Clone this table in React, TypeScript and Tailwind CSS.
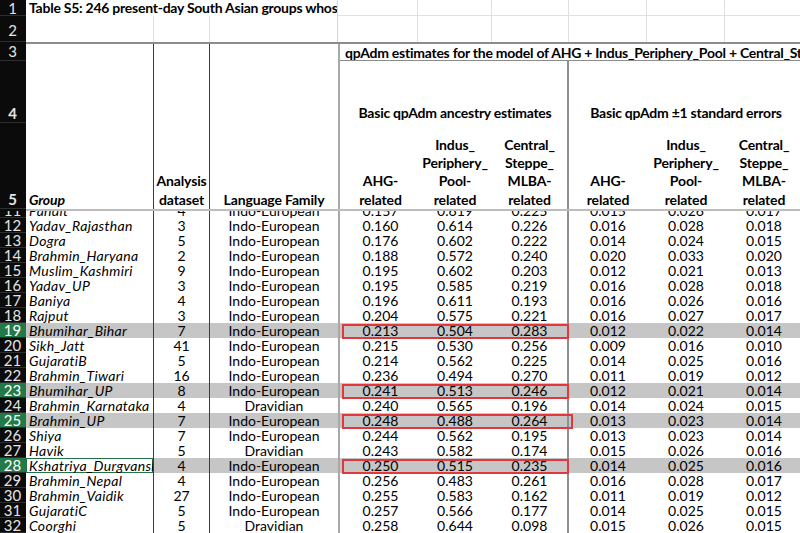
import React from "react"

type Row = {
  n: number
  group: string
  ds: string
  lang: string
  v: string[]
  hl?: boolean
  red?: "box" | "wide"
  active?: boolean
}

const IE = "Indo-European"
const DR = "Dravidian"

const rows: Row[] = [
  { n: 12, group: "Yadav_Rajasthan", ds: "3", lang: IE, v: ["0.160", "0.614", "0.226", "0.016", "0.028", "0.018"] },
  { n: 13, group: "Dogra", ds: "5", lang: IE, v: ["0.176", "0.602", "0.222", "0.014", "0.024", "0.015"] },
  { n: 14, group: "Brahmin_Haryana", ds: "2", lang: IE, v: ["0.188", "0.572", "0.240", "0.020", "0.033", "0.020"] },
  { n: 15, group: "Muslim_Kashmiri", ds: "9", lang: IE, v: ["0.195", "0.602", "0.203", "0.012", "0.021", "0.013"] },
  { n: 16, group: "Yadav_UP", ds: "3", lang: IE, v: ["0.195", "0.585", "0.219", "0.016", "0.028", "0.018"] },
  { n: 17, group: "Baniya", ds: "4", lang: IE, v: ["0.196", "0.611", "0.193", "0.016", "0.026", "0.016"] },
  { n: 18, group: "Rajput", ds: "3", lang: IE, v: ["0.204", "0.575", "0.221", "0.016", "0.027", "0.017"] },
  { n: 19, group: "Bhumihar_Bihar", ds: "7", lang: IE, v: ["0.213", "0.504", "0.283", "0.012", "0.022", "0.014"], hl: true, red: "box" },
  { n: 20, group: "Sikh_Jatt", ds: "41", lang: IE, v: ["0.215", "0.530", "0.256", "0.009", "0.016", "0.010"] },
  { n: 21, group: "GujaratiB", ds: "5", lang: IE, v: ["0.214", "0.562", "0.225", "0.014", "0.025", "0.016"] },
  { n: 22, group: "Brahmin_Tiwari", ds: "16", lang: IE, v: ["0.236", "0.494", "0.270", "0.011", "0.019", "0.012"] },
  { n: 23, group: "Bhumihar_UP", ds: "8", lang: IE, v: ["0.241", "0.513", "0.246", "0.012", "0.021", "0.014"], hl: true, red: "box" },
  { n: 24, group: "Brahmin_Karnataka", ds: "4", lang: DR, v: ["0.240", "0.565", "0.196", "0.014", "0.024", "0.015"] },
  { n: 25, group: "Brahmin_UP", ds: "7", lang: IE, v: ["0.248", "0.488", "0.264", "0.013", "0.023", "0.014"], hl: true, red: "wide" },
  { n: 26, group: "Shiya", ds: "7", lang: IE, v: ["0.244", "0.562", "0.195", "0.013", "0.023", "0.014"] },
  { n: 27, group: "Havik", ds: "5", lang: DR, v: ["0.243", "0.582", "0.174", "0.015", "0.026", "0.016"] },
  { n: 28, group: "Kshatriya_Durgvanshi", ds: "4", lang: IE, v: ["0.250", "0.515", "0.235", "0.014", "0.025", "0.016"], hl: true, red: "box", active: true },
  { n: 29, group: "Brahmin_Nepal", ds: "4", lang: IE, v: ["0.256", "0.483", "0.261", "0.016", "0.028", "0.017"] },
  { n: 30, group: "Brahmin_Vaidik", ds: "27", lang: IE, v: ["0.255", "0.583", "0.162", "0.011", "0.019", "0.012"] },
  { n: 31, group: "GujaratiC", ds: "5", lang: IE, v: ["0.257", "0.566", "0.177", "0.014", "0.025", "0.015"] },
  { n: 32, group: "Coorghi", ds: "5", lang: DR, v: ["0.258", "0.644", "0.098", "0.015", "0.026", "0.015"] },
]

const pandit: Row = { n: 11, group: "Pandit", ds: "4", lang: IE, v: ["0.157", "0.619", "0.225", "0.015", "0.026", "0.017"] }

function RowHead({ n, sel, align = "center" }: { n: number; sel?: boolean; align?: "center" | "end" }) {
  return (
    <div
      className={`flex w-[26px] shrink-0 justify-center border-b border-[#2e2e2e] pr-[1px] text-[15px] ${
        align === "end" ? "items-end" : "items-center"
      } ${sel ? "bg-[#237a48] text-white" : "bg-[#0b0b0b] text-[#e4e4e4]"}`}
    >
      {n}
    </div>
  )
}

function DataRow({ r }: { r: Row }) {
  return (
    <div className={`flex h-[15px] shrink-0 leading-[15px] ${r.hl ? "bg-[#c6c6c6]" : ""}`}>
      <RowHead n={r.n} sel={r.hl} />
      <div
        className={`w-[128px] shrink-0 overflow-hidden whitespace-nowrap border-r border-[#3c3c3c] pl-[3px] italic tracking-[0.3px] ${
          r.active ? "bg-white shadow-[inset_0_0_0_1px_#217346]" : ""
        }`}
      >
        {r.group}
      </div>
      <div className="w-[56px] shrink-0 border-r border-[#3c3c3c] text-center">{r.ds}</div>
      <div className="w-[130px] shrink-0 border-r-2 border-[#a8a8a8] text-center">{r.lang}</div>
      <div className="w-[3px] shrink-0" />
      <div className="relative flex w-[226px] shrink-0">
        <div className="w-[75px] shrink-0 text-center">{r.v[0]}</div>
        <div className="w-[74px] shrink-0 text-center">{r.v[1]}</div>
        <div className="w-[77px] shrink-0 border-r-2 border-[#8f8f8f] text-center">{r.v[2]}</div>
        {r.red && (
          <div
            className={`pointer-events-none absolute -left-[1px] top-[1px] -bottom-[1px] z-10 border-2 border-[#e0383c] ${
              r.red === "wide" ? "-right-[4px]" : "right-0"
            }`}
          />
        )}
      </div>
      <div className="w-[78px] shrink-0 text-center">{r.v[3]}</div>
      <div className="w-[78px] shrink-0 text-center">{r.v[4]}</div>
      <div className="w-[78px] shrink-0 text-center">{r.v[5]}</div>
    </div>
  )
}

export default function App() {
  return (
    <div className="flex h-[533px] w-[800px] flex-col overflow-hidden bg-white font-['Lato','Liberation_Sans',sans-serif] text-[14px] text-black">
      {/* row 1 - title */}
      <div className="flex h-[16px] shrink-0 leading-[16px]">
        <RowHead n={1} />
        <div className="w-[312px] shrink-0 overflow-hidden whitespace-nowrap border-r border-[#d6d6d6] pl-[3px] font-bold tracking-[-0.25px]">
          Table S5: 246 present-day South Asian groups whose qpAdm estimates
        </div>
        <div className="w-[80px] shrink-0 border-r border-b border-[#e0e0e0]" />
        <div className="w-[74px] shrink-0 border-r border-b border-[#e0e0e0]" />
        <div className="w-[77px] shrink-0 border-r border-b border-[#e0e0e0]" />
        <div className="w-[78px] shrink-0 border-r border-b border-[#e0e0e0]" />
        <div className="w-[78px] shrink-0 border-r border-b border-[#e0e0e0]" />
        <div className="w-[78px] shrink-0 border-b border-[#e0e0e0]" />
      </div>

      {/* row 2 */}
      <div className="flex h-[26px] shrink-0">
        <RowHead n={2} align="end" />
        <div className="w-[128px] shrink-0 border-r border-[#e0e0e0]" />
        <div className="w-[56px] shrink-0 border-r border-[#e0e0e0]" />
        <div className="w-[128px] shrink-0 border-r border-[#d6d6d6]" />
        <div className="w-[80px] shrink-0 border-r border-[#e0e0e0]" />
        <div className="w-[74px] shrink-0 border-r border-[#e0e0e0]" />
        <div className="w-[77px] shrink-0 border-r border-[#e0e0e0]" />
        <div className="w-[78px] shrink-0 border-r border-[#e0e0e0]" />
        <div className="w-[78px] shrink-0 border-r border-[#e0e0e0]" />
        <div className="w-[78px] shrink-0" />
      </div>

      {/* row 3 - model title */}
      <div className="flex h-[19px] shrink-0 leading-[17px]">
        <RowHead n={3} />
        <div className="flex flex-1 border-t-2 border-[#8c8c8c]">
          <div className="w-[128px] shrink-0 border-r border-[#3c3c3c]" />
          <div className="w-[56px] shrink-0 border-r border-[#3c3c3c]" />
          <div className="w-[130px] shrink-0 border-r-2 border-[#a8a8a8]" />
          <div className="flex-1 overflow-hidden whitespace-nowrap border-b border-[#8c8c8c] pl-[5px] font-bold tracking-[-0.25px]">
            qpAdm estimates for the model of AHG + Indus_Periphery_Pool + Central_Steppe_MLBA
          </div>
        </div>
      </div>

      {/* row 4 - section titles */}
      <div className="flex h-[62px] shrink-0 font-bold leading-[18px] tracking-[-0.25px]">
        <RowHead n={4} align="end" />
        <div className="w-[128px] shrink-0 border-r border-[#3c3c3c]" />
        <div className="w-[56px] shrink-0 border-r border-[#3c3c3c]" />
        <div className="w-[130px] shrink-0 border-r-2 border-[#a8a8a8]" />
        <div className="w-[3px] shrink-0" />
        <div className="flex w-[226px] shrink-0 items-end justify-center border-r-2 border-[#8f8f8f] pb-[1px]">
          Basic qpAdm ancestry estimates
        </div>
        <div className="flex w-[234px] shrink-0 items-end justify-center pb-[1px]">
          Basic qpAdm ±1 standard errors
        </div>
      </div>

      {/* row 5 - column headers */}
      <div className="flex h-[86px] shrink-0 font-bold leading-[18.3px] tracking-[-0.15px]">
        <RowHead n={5} align="end" />
        <div className="flex w-[128px] shrink-0 items-end border-r border-[#3c3c3c] pl-[3px] italic">Group</div>
        <div className="flex w-[56px] shrink-0 items-end justify-center border-r border-[#3c3c3c] text-center">
          Analysis
          <br />
          dataset
        </div>
        <div className="flex w-[130px] shrink-0 items-end justify-center border-r-2 border-[#a8a8a8]">Language Family</div>
        <div className="w-[3px] shrink-0" />
        <div className="flex w-[75px] shrink-0 items-end justify-center text-center">
          AHG-
          <br />
          related
        </div>
        <div className="flex w-[74px] shrink-0 items-end justify-center text-center">
          Indus_
          <br />
          Periphery_
          <br />
          Pool-
          <br />
          related
        </div>
        <div className="flex w-[77px] shrink-0 items-end justify-center border-r-2 border-[#8f8f8f] text-center">
          Central_
          <br />
          Steppe_
          <br />
          MLBA-
          <br />
          related
        </div>
        <div className="flex w-[78px] shrink-0 items-end justify-center text-center">
          AHG-
          <br />
          related
        </div>
        <div className="flex w-[78px] shrink-0 items-end justify-center text-center">
          Indus_
          <br />
          Periphery_
          <br />
          Pool-
          <br />
          related
        </div>
        <div className="flex w-[78px] shrink-0 items-end justify-center text-center">
          Central_
          <br />
          Steppe_
          <br />
          MLBA-
          <br />
          related
        </div>
      </div>

      {/* frozen pane split */}
      <div className="flex h-[2px] shrink-0">
        <div className="w-[26px] shrink-0 bg-[#0b0b0b]" />
        <div className="flex-1 bg-[#bdbdbd]" />
      </div>

      {/* row 11, scrolled half out of view */}
      <div className="h-[7px] shrink-0 overflow-hidden">
        <div className="-mt-[8px]">
          <DataRow r={pandit} />
        </div>
      </div>

      {rows.map((r) => (
        <DataRow key={r.n} r={r} />
      ))}
    </div>
  )
}
